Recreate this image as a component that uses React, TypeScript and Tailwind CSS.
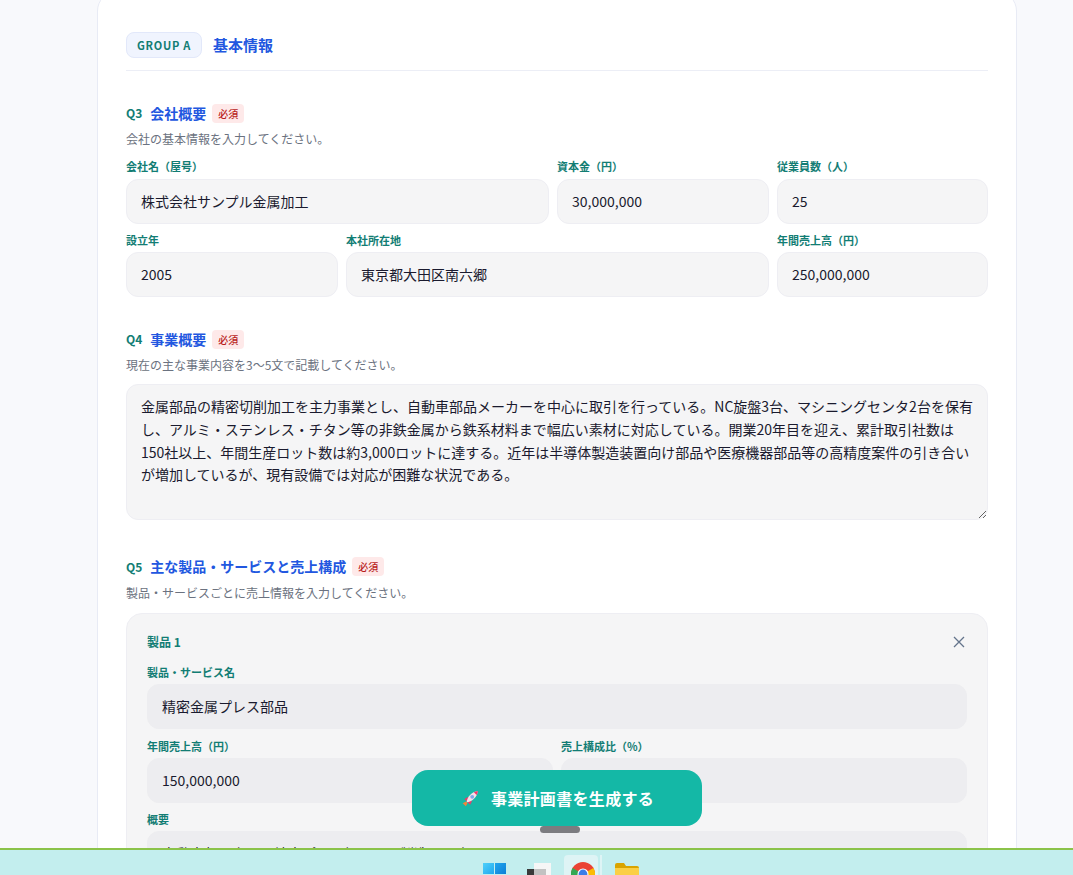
function Field({ label, value, dark, className = "", labelClass = "mb-[4px]" }: { label: string; value: string; dark?: boolean; className?: string; labelClass?: string }) {
  return (
    <div className={className}>
      <div className={`text-[11px] leading-[16px] font-semibold text-[#127d74] ${labelClass}`}>{label}</div>
      <div className={`h-[45px] rounded-[12px] border px-[14px] flex items-center text-[14px] text-[#1a1a2e] ${dark ? "bg-[#ededf0] border-[#ededf0]" : "bg-[#f5f5f6] border-[#eeeef3]"}`}>{value}</div>
    </div>
  );
}
function QHead({ q, title, desc }: { q: string; title: string; desc: string }) {
  return (
    <>
      <div className="flex items-center h-[20px]">
        <span className="text-[12px] font-bold text-[#127d74] mr-[8px]">{q}</span>
        <span className="text-[14px] font-semibold text-[#2257e0]">{title}</span>
        <span className="ml-[6px] h-[19px] px-[6px] rounded-[4px] bg-[#fee9e9] text-[10px] font-medium text-[#b91c1c] flex items-center">必須</span>
      </div>
      <div className="mt-[7px] text-[12px] leading-[18px] text-[#6b7280]">{desc}</div>
    </>
  );
}
export default function App() {
  return (
    <div className="h-[875px] w-[1073px] overflow-hidden flex flex-col relative bg-[#f8f9fc] font-['Noto_Sans_CJK_JP','Noto_Sans',sans-serif]">
      <div className="h-[848px] overflow-hidden shrink-0">
        <div className="w-[920px] ml-[97px] -mt-[9px] bg-white border border-[#e8ebf5] rounded-[20px] px-[28px] pt-[40px]">
          <div className="flex items-center gap-[11px] pb-[12px] border-b border-[#eceef6]">
            <span className="h-[26px] px-[10px] flex items-center rounded-[8px] bg-[#f0f4fe] border border-[#e2e8fa] text-[11px] font-bold tracking-[0.065em] text-[#127d74]">GROUP A</span>
            <span className="text-[15px] font-bold text-[#2257e0]">基本情報</span>
          </div>
          <div className="mt-[32px]">
            <QHead q="Q3" title="会社概要" desc="会社の基本情報を入力してください。" />
            <div className="mt-[10px] grid grid-cols-[1fr_212px_211px] gap-x-[8px] gap-y-[8px]">
              <Field labelClass="mb-[5px]" label="会社名（屋号）" value="株式会社サンプル金属加工" />
              <Field labelClass="mb-[5px]" label="資本金（円）" value="30,000,000" />
              <Field labelClass="mb-[5px]" label="従業員数（人）" value="25" />
            </div>
            <div className="mt-[8px] grid grid-cols-[212px_1fr_211px] gap-x-[8px]">
              <Field label="設立年" value="2005" />
              <Field label="本社所在地" value="東京都大田区南六郷" />
              <Field label="年間売上高（円）" value="250,000,000" />
            </div>
          </div>
          <div className="mt-[32px]">
            <QHead q="Q4" title="事業概要" desc="現在の主な事業内容を3〜5文で記載してください。" />
            <textarea readOnly rows={5} className="mt-[10px] block w-full rounded-[12px] border border-[#eeeef3] bg-[#f5f5f6] px-[14px] py-[10px] text-[14px] leading-[22.75px] text-[#1a1a2e] outline-none resize-y" value="金属部品の精密切削加工を主力事業とし、自動車部品メーカーを中心に取引を行っている。NC旋盤3台、マシニングセンタ2台を保有し、アルミ・ステンレス・チタン等の非鉄金属から鉄系材料まで幅広い素材に対応している。開業20年目を迎え、累計取引社数は150社以上、年間生産ロット数は約3,000ロットに達する。近年は半導体製造装置向け部品や医療機器部品等の高精度案件の引き合いが増加しているが、現有設備では対応が困難な状況である。" />
          </div>
          <div className="mt-[37px]">
            <QHead q="Q5" title="主な製品・サービスと売上構成" desc="製品・サービスごとに売上情報を入力してください。" />
            <div className="mt-[11px] rounded-[16px] border border-[#eeeef3] bg-[#f5f5f6] px-[20px] pt-[18px] pb-[20px]">
              <div className="flex items-center justify-between h-[20px]">
                <span className="text-[12px] font-bold text-[#127d74]">製品 1</span>
                <svg width="14" height="14" viewBox="0 0 14 14" className="mr-[1px]" fill="none" stroke="#64748b" strokeWidth="1.3"><path d="M2 2l10 10M12 2L2 12" /></svg>
              </div>
              <Field dark className="mt-[12px]" label="製品・サービス名" value="精密金属プレス部品" />
              <div className="mt-[9px] grid grid-cols-2 gap-x-[8px]">
                <Field dark label="年間売上高（円）" value="150,000,000" />
                <Field dark label="売上構成比（%）" value="" />
              </div>
              <Field dark className="mt-[8px]" label="概要" value="自動車部品向けの精密プレス加工品を製造・販売" />
            </div>
          </div>
        </div>
      </div>
      <div className="h-[27px] shrink-0 bg-[#c3eeee] border-t-[2px] border-[#8bc34a] overflow-hidden flex items-start pl-[483px]">
        <svg className="mt-[13px] shrink-0" width="23" height="23" viewBox="0 0 23 23">
          <defs>
            <linearGradient id="w1" x1="0" y1="0" x2="1" y2="1"><stop offset="0" stopColor="#4fd0fa" /><stop offset="1" stopColor="#1fa8ee" /></linearGradient>
            <linearGradient id="w2" x1="0" y1="0" x2="1" y2="1"><stop offset="0" stopColor="#22a6ee" /><stop offset="1" stopColor="#0c7fd6" /></linearGradient>
          </defs>
          <path d="M0 0h11v11H0z" fill="url(#w1)" /><path d="M12 0h11v11H12z" fill="url(#w2)" /><path d="M0 12h11v11H0z" fill="url(#w2)" /><path d="M12 12h11v11H12z" fill="url(#w2)" />
        </svg>
        <svg className="mt-[13px] ml-[21px] shrink-0" width="24" height="24" viewBox="0 0 24 24"><path d="M7 0h17v24H7z" fill="#f6f6f6" /><path d="M7 6h12v18H7z" fill="#c2c2c2" /><path d="M0 6h7v18H0z" fill="#3a3a3a" /></svg>
        <div className="ml-[13px] mt-[5px] shrink-0 w-[34px] h-[30px] rounded-[4px] bg-[#def4f5] pl-[7px] pt-[7px]">
          <svg width="24" height="24" viewBox="0 0 24 24"><circle cx="12" cy="12" r="12" fill="#ea4335" /><path d="M12 12L1.6 18A12 12 0 0 1 1.6 6z" fill="#34a853" /><path d="M12 12l10.4-6A12 12 0 0 1 12 24z" fill="#fbbc04" /><circle cx="12" cy="12" r="5.5" fill="#fff" /><circle cx="12" cy="12" r="4.4" fill="#3b7de8" /></svg>
        </div>
        <div className="ml-[2px] mt-[5px] shrink-0 w-[2px] h-[30px] bg-[#def4f5]" />
        <svg className="ml-[13px] mt-[13px] shrink-0" width="24" height="22" viewBox="0 0 24 22"><path d="M0 2a2 2 0 0 1 2-2h7l2 3h11a2 2 0 0 1 2 2v17H0z" fill="#d9a400" /><path d="M0 5h24v17H0z" fill="#fbcf45" /></svg>
      </div>
      <button className="absolute left-[412px] top-[770px] w-[290px] h-[56px] pl-[2px] rounded-[16px] bg-[#14b8a6] text-white text-[16px] font-bold tracking-[0.02em] flex items-center justify-center gap-[12px]">
        <svg role="img" aria-label="🚀" width="17" height="17" viewBox="0 0 16 16" className="shrink-0">
          <path d="M.6 12.4l3.2-1.6 1.4 1.4-1.6 3.2z" fill="#f0843c" />
          <path d="M2.2 8.4l3.8-2-1.2 4.4zM7.6 13.8l2-3.8-4.4 1.2z" fill="#f0386b" />
          <path d="M4.4 11.6C4.8 6.6 9 1.8 15 1c-.8 6-5.6 10.2-10.6 10.6z" fill="#f6dfe7" />
          <path d="M11.2 2.2c1-.6 2.6-1 3.8-1.2-.2 1.2-.6 2.8-1.2 3.8z" fill="#f0386b" />
          <circle cx="9.6" cy="6.4" r="1.8" fill="#7fa8e8" />
        </svg>
        <span>事業計画書を生成する</span>
      </button>
      <div className="absolute left-[540px] top-[826px] w-[40px] h-[7px] rounded-full bg-[#7c7c80]" />
    </div>
  );
}
